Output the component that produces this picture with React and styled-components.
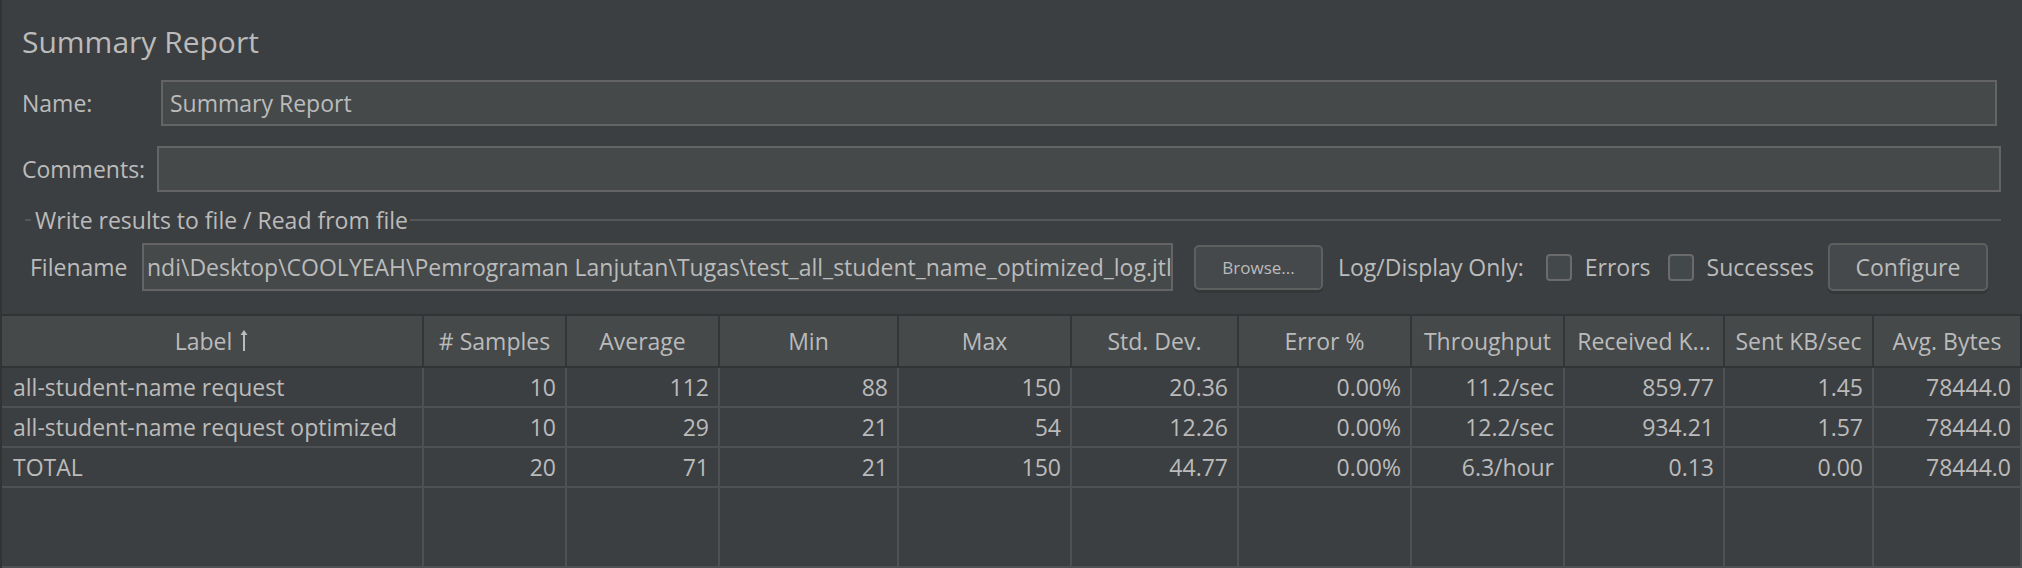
import React from "react";
import styled, { createGlobalStyle } from "styled-components";

const GlobalStyle = createGlobalStyle`
  html, body {
    margin: 0;
    padding: 0;
    background: #3c3f41;
  }
  * {
    box-sizing: border-box;
  }
`;

const Page = styled.div`
  width: 2022px;
  height: 568px;
  background: #3c3f41;
  border-left: 2px solid #313335;
  display: flex;
  flex-direction: column;
  overflow: hidden;
  font-family: "Open Sans", "Noto Sans", sans-serif;
  font-size: 23px;
  color: #bbbbbb;
`;

const Title = styled.div`
  margin-top: 22px;
  padding-left: 20px;
  height: 40px;
  line-height: 40px;
  font-size: 30px;
`;

const Form = styled.div`
  margin-top: 18px;
  padding: 0 21px 0 20px;
  display: flex;
  flex-direction: column;
`;

const Row = styled.div`
  display: flex;
  align-items: center;
  height: 46px;
  margin-top: ${(p) => p.$top || 0}px;
  margin-right: ${(p) => p.$trim || 0}px;
`;

const Label = styled.div`
  width: ${(p) => p.$width}px;
  flex-shrink: 0;
  white-space: nowrap;
`;

const Field = styled.div`
  flex: 1;
  height: 46px;
  background: #45494a;
  border: 2px solid #646464;
  display: flex;
  align-items: center;
  padding: 0 6px 0 ${(p) => p.$pad || 7}px;
  overflow: hidden;
  white-space: nowrap;
`;

const Section = styled.div`
  margin-top: 13px;
  margin-left: 23px;
  margin-right: 21px;
  height: 30px;
  display: flex;
  align-items: center;
`;

const Dash = styled.div`
  width: 6px;
  height: 2px;
  background: #55585a;
  margin-right: 4px;
`;

const SectionTitle = styled.span`
  white-space: nowrap;
  margin-right: 2px;
`;

const Line = styled.div`
  flex: 1;
  height: 2px;
  background: #55585a;
`;

const FileRow = styled.div`
  margin-top: 8px;
  padding-left: 28px;
  height: 48px;
  display: flex;
  align-items: center;
`;

const FileField = styled(Field)`
  flex: none;
  width: 1031px;
  height: 48px;
`;

const Button = styled.div`
  width: ${(p) => p.$width}px;
  height: ${(p) => p.$height}px;
  margin-left: ${(p) => p.$left}px;
  flex-shrink: 0;
  border: 2px solid #5e6060;
  border-radius: 5px;
  background: #45494b;
  box-shadow: 0 3px 0 #343638;
  display: flex;
  align-items: center;
  justify-content: center;
  font-size: ${(p) => p.$size || 23}px;
  white-space: nowrap;
`;

const Text = styled.span`
  margin-left: ${(p) => p.$left}px;
  white-space: nowrap;
`;

const Check = styled.div`
  width: 26px;
  height: 27px;
  margin-left: ${(p) => p.$left}px;
  border: 2px solid #6b6b6b;
  border-radius: 4px;
  background: #43494a;
  flex-shrink: 0;
`;

const cols = [422, 143, 153, 179, 173, 167, 173, 153, 160, 149, 148];
const gridCols = cols.map((c) => `${c}px`).join(" ");

const Table = styled.div`
  margin-top: 23px;
  flex: 1;
  display: flex;
  flex-direction: column;
  border-top: 2px solid #313335;
`;

const HeadRow = styled.div`
  display: grid;
  grid-template-columns: ${gridCols};
  height: 52px;
  border-bottom: 2px solid #313335;
`;

const HeadCell = styled.div`
  background: #45494a;
  border-right: 2px solid #333638;
  display: flex;
  align-items: center;
  justify-content: center;
  white-space: nowrap;
  overflow: hidden;
`;

const BodyRow = styled.div`
  display: grid;
  grid-template-columns: ${gridCols};
  height: 40px;
  border-bottom: 2px solid #4e5153;
  flex: ${(p) => (p.$fill ? 1 : "none")};
`;

const Cell = styled.div`
  border-right: 2px solid #4e5153;
  display: flex;
  align-items: center;
  justify-content: ${(p) => (p.$left ? "flex-start" : "flex-end")};
  padding: 0 ${(p) => (p.$left ? 0 : 9)}px 0 ${(p) => (p.$left ? 11 : 0)}px;
  white-space: nowrap;
  overflow: hidden;
`;

const SortArrow = styled.svg`
  margin-left: 7px;
  margin-top: -2px;
`;

const headers = [
  "Label",
  "# Samples",
  "Average",
  "Min",
  "Max",
  "Std. Dev.",
  "Error %",
  "Throughput",
  "Received K...",
  "Sent KB/sec",
  "Avg. Bytes",
];

const rows = [
  ["all-student-name request", "10", "112", "88", "150", "20.36", "0.00%", "11.2/sec", "859.77", "1.45", "78444.0"],
  ["all-student-name request optimized", "10", "29", "21", "54", "12.26", "0.00%", "12.2/sec", "934.21", "1.57", "78444.0"],
  ["TOTAL", "20", "71", "21", "150", "44.77", "0.00%", "6.3/hour", "0.13", "0.00", "78444.0"],
];

const App = () => {
  return (
    <Page>
      <GlobalStyle />
      <Title>Summary Report</Title>
      <Form>
        <Row $trim={4}>
          <Label $width={139}>Name:</Label>
          <Field>Summary Report</Field>
        </Row>
        <Row $top={20}>
          <Label $width={135}>Comments:</Label>
          <Field />
        </Row>
      </Form>
      <Section>
        <Dash />
        <SectionTitle>Write results to file / Read from file</SectionTitle>
        <Line />
      </Section>
      <FileRow>
        <Label $width={112}>Filename</Label>
        <FileField $pad={3}>
          ndi\Desktop\COOLYEAH\Pemrograman Lanjutan\Tugas\test_all_student_name_optimized_log.jtl
        </FileField>
        <Button $width={129} $height={45} $left={21} $size={17}>
          Browse...
        </Button>
        <Text $left={15}>Log/Display Only:</Text>
        <Check $left={22} />
        <Text $left={13}>Errors</Text>
        <Check $left={17} />
        <Text $left={13}>Successes</Text>
        <Button $width={160} $height={48} $left={14}>
          Configure
        </Button>
      </FileRow>
      <Table>
        <HeadRow>
          {headers.map((h, i) => (
            <HeadCell key={h}>
              {h}
              {i === 0 && (
                <SortArrow width="10" height="24" viewBox="0 0 10 24">
                  <path d="M5 3 L5 23" stroke="#bbbbbb" strokeWidth="2" />
                  <path d="M1.5 7 L5 2 L8.5 7 Z" fill="#bbbbbb" />
                </SortArrow>
              )}
            </HeadCell>
          ))}
        </HeadRow>
        {rows.map((r) => (
          <BodyRow key={r[0]}>
            {r.map((v, i) => (
              <Cell key={i} $left={i === 0}>
                {v}
              </Cell>
            ))}
          </BodyRow>
        ))}
        <BodyRow $fill>
          {cols.map((c, i) => (
            <Cell key={i} />
          ))}
        </BodyRow>
      </Table>
    </Page>
  );
};

export default App;
